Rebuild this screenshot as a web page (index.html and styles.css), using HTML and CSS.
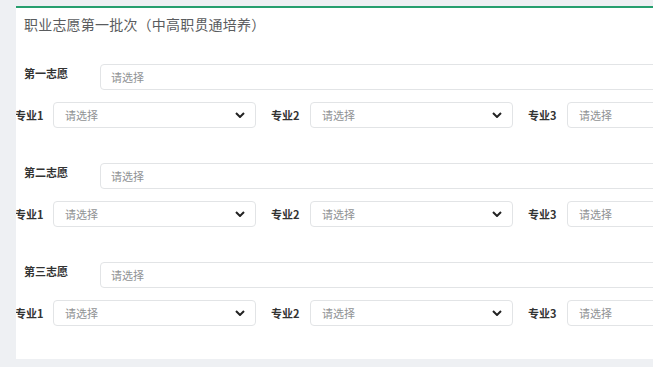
FILE: index.html
```html
<!DOCTYPE html>
<html lang="zh-CN">
<head>
<meta charset="utf-8">
<title>职业志愿第一批次</title>
<link rel="stylesheet" href="styles.css">
</head>
<body>
<div class="panel">
  <h2 class="title">职业志愿第一批次（中高职贯通培养）</h2>

  <div class="group">
    <div class="row-main">
      <label class="main-label">第一志愿</label>
      <div class="field wide">请选择</div>
    </div>
    <div class="row-majors">
      <label class="m-label">专业1</label>
      <div class="field select">请选择<svg class="chev" viewBox="0 0 10 6"><polyline points="1,1 5,5 9,1"/></svg></div>
      <label class="m-label">专业2</label>
      <div class="field select">请选择<svg class="chev" viewBox="0 0 10 6"><polyline points="1,1 5,5 9,1"/></svg></div>
      <label class="m-label">专业3</label>
      <div class="field select">请选择<svg class="chev" viewBox="0 0 10 6"><polyline points="1,1 5,5 9,1"/></svg></div>
    </div>
  </div>

  <div class="group">
    <div class="row-main">
      <label class="main-label">第二志愿</label>
      <div class="field wide">请选择</div>
    </div>
    <div class="row-majors">
      <label class="m-label">专业1</label>
      <div class="field select">请选择<svg class="chev" viewBox="0 0 10 6"><polyline points="1,1 5,5 9,1"/></svg></div>
      <label class="m-label">专业2</label>
      <div class="field select">请选择<svg class="chev" viewBox="0 0 10 6"><polyline points="1,1 5,5 9,1"/></svg></div>
      <label class="m-label">专业3</label>
      <div class="field select">请选择<svg class="chev" viewBox="0 0 10 6"><polyline points="1,1 5,5 9,1"/></svg></div>
    </div>
  </div>

  <div class="group">
    <div class="row-main">
      <label class="main-label">第三志愿</label>
      <div class="field wide">请选择</div>
    </div>
    <div class="row-majors">
      <label class="m-label">专业1</label>
      <div class="field select">请选择<svg class="chev" viewBox="0 0 10 6"><polyline points="1,1 5,5 9,1"/></svg></div>
      <label class="m-label">专业2</label>
      <div class="field select">请选择<svg class="chev" viewBox="0 0 10 6"><polyline points="1,1 5,5 9,1"/></svg></div>
      <label class="m-label">专业3</label>
      <div class="field select">请选择<svg class="chev" viewBox="0 0 10 6"><polyline points="1,1 5,5 9,1"/></svg></div>
    </div>
  </div>
</div>
</body>
</html>
```

FILE: styles.css
```css
html, body {
  margin: 0;
  padding: 0;
  overflow: hidden;
}
body {
  background: #eef0f3;
  font-family: "Noto Sans CJK SC", "Noto Sans", sans-serif;
  color: #333;
  height: 367px;
}
.panel {
  margin: 6px 0 0 16px;
  width: calc(100% - 16px);
  box-sizing: border-box;
  overflow: hidden;
  background: #fff;
  border-top: 2px solid #279f6f;
  padding: 6px 0 33px 0;
}
.title {
  margin: 0 0 30px 8px;
  font-size: 14px;
  line-height: 20px;
  font-weight: normal;
  color: #5a5c5e;
  letter-spacing: 0.2px;
}
.group + .group {
  margin-top: 35px;
}
.row-main {
  display: flex;
  align-items: flex-start;
  height: 26px;
  padding-left: 8px;
  margin-right: -20px;
}
.main-label {
  width: 76px;
  flex: none;
  font-size: 11px;
  font-weight: bold;
  line-height: 14px;
  padding-top: 2px;
  color: #333;
}
.field {
  box-sizing: border-box;
  height: 26px;
  border: 1px solid #e2e4e6;
  border-radius: 4px;
  background: #fff;
  font-size: 11px;
  line-height: 24px;
  color: #909294;
  padding-left: 10px;
  display: flex;
  align-items: center;
}
.wide {
  flex: 1;
}
.row-majors {
  display: flex;
  align-items: center;
  margin-top: 12px;
  margin-left: -1px;
  height: 26px;
}
.m-label {
  width: 39px;
  font-size: 11px;
  font-weight: bold;
  color: #333;
  flex: none;
}
.m-label:first-child {
  width: 38px;
}
.select {
  width: 203px;
  flex: none;
  margin-right: 15px;
  padding-left: 11px;
  padding-right: 10px;
  justify-content: space-between;
}
.chev {
  width: 10px;
  height: 6px;
  fill: none;
  stroke: #222;
  stroke-width: 2;
}
```
